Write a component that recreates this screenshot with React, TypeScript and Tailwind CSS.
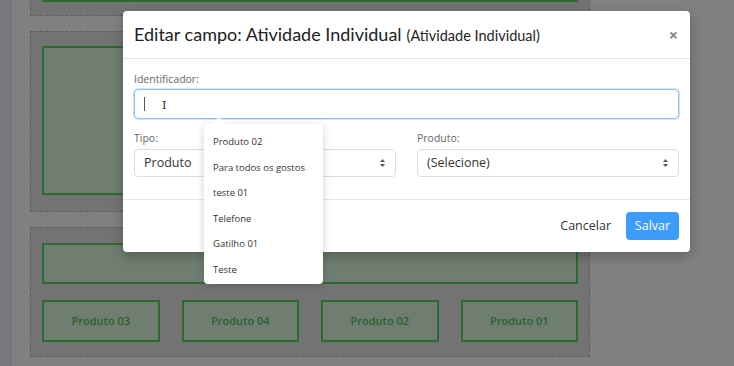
const SelectArrows = () => (
  <svg width="7" height="10" viewBox="0 0 7 10" className="shrink-0">
    <path d="M3.5 1 L6 4 L1 4 Z" fill="#555" />
    <path d="M3.5 9 L6 6 L1 6 Z" fill="#555" />
  </svg>
)

const ProductBox = ({ label }: { label: string }) => (
  <div className="flex-1 h-[42px] border-2 border-[#2b6b30] bg-[#6f7e70] flex items-center justify-center text-[11px] font-semibold text-[#2e5f31]">
    {label}
  </div>
)

export default function App() {
  const options = ["Produto 02", "Para todos os gostos", "teste 01", "Telefone", "Gatilho 01", "Teste"]
  const products = ["Produto 03", "Produto 04", "Produto 02", "Produto 01"]

  return (
    <div className="relative w-[734px] h-[366px] overflow-hidden bg-[#808080] flex" style={{ fontFamily: "'Open Sans', 'Noto Sans', sans-serif" }}>
      {/* left strip */}
      <div className="w-[12px] h-full bg-[#77787c]" />

      {/* canvas */}
      <div className="flex flex-col gap-[15px] pl-[18px] mt-[-12px]">
        <div className="w-[560px] h-[28px] border border-dashed border-[#5e5e5e] bg-[#747373] px-[11px]">
          <div className="h-[13px] border-2 border-t-0 border-[#2b6b30] bg-[#6f7e70]" />
        </div>
        <div className="w-[560px] h-[181px] border border-dashed border-[#5e5e5e] bg-[#747373] px-[11px] pt-[14px] pb-[16px]">
          <div className="h-full border-2 border-[#2b6b30] bg-[#6f7e70]" />
        </div>
        <div className="w-[560px] h-[130px] border border-dashed border-[#5e5e5e] bg-[#747373] px-[11px] pt-[15px] flex flex-col gap-[16px]">
          <div className="h-[41px] border-2 border-[#2b6b30] bg-[#6f7e70]" />
          <div className="flex gap-[22px]">
            {products.map((p) => (
              <ProductBox key={p} label={p} />
            ))}
          </div>
        </div>
      </div>

      {/* modal */}
      <div className="absolute left-[123px] top-[11px] w-[567px] bg-white rounded-[4px] shadow-[0_4px_12px_rgba(0,0,0,0.25)]">
        <div className="h-[48px] px-[11px] flex items-center justify-between border-b border-[#e6e6ea]">
          <div className="text-[#222] flex items-baseline" style={{ fontFamily: "Lato, 'Open Sans', sans-serif" }}>
            <span className="text-[18px]">Editar campo: Atividade Individual</span>
            <span className="text-[14.5px] ml-[5px]">(Atividade Individual)</span>
          </div>
          <span className="text-[16px] font-bold text-[#888] mr-[1px] leading-none">×</span>
        </div>

        <div className="px-[11px] pt-[13px] pb-[22px] border-b border-[#e6e6ea]">
          <div className="text-[10.5px] text-[#666] leading-[14px]">Identificador:</div>
          <div className="mt-[3px] h-[30px] rounded-[4px] border border-[#8fc1f5] shadow-[0_0_0_1px_#d2e6fb] flex items-center pl-[9px]">
            <div className="w-[1px] h-[14px] bg-[#555]" />
            <span className="ml-[17px] text-[13px] text-[#333] font-serif leading-none">I</span>
          </div>

          <div className="flex gap-[21px] mt-[12px]">
            <div className="flex-1">
              <div className="text-[10.5px] text-[#666] leading-[14px]">Tipo:</div>
              <div className="mt-[4px] h-[28px] rounded-[4px] border border-[#dcdcdc] flex items-center justify-between px-[9px]">
                <span className="text-[12.5px] text-[#333]">Produto</span>
                <SelectArrows />
              </div>
            </div>
            <div className="flex-1">
              <div className="text-[10.5px] text-[#666] leading-[14px]">Produto:</div>
              <div className="mt-[4px] h-[28px] rounded-[4px] border border-[#dcdcdc] flex items-center justify-between px-[9px]">
                <span className="text-[12.5px] text-[#333]">(Selecione)</span>
                <SelectArrows />
              </div>
            </div>
          </div>
        </div>

        <div className="h-[52px] px-[11px] flex items-center justify-end gap-[15px]">
          <span className="text-[12.5px] text-[#333]">Cancelar</span>
          <button className="h-[28px] w-[53px] rounded-[4px] bg-[#3d9bfb] text-white text-[12.5px]">Salvar</button>
        </div>
      </div>

      {/* dropdown */}
      <div className="absolute left-[204px] top-[124px] w-[119px] h-[160px] bg-white rounded-[4px] shadow-[0_2px_8px_rgba(0,0,0,0.18)] pl-[9px] pt-[11px] flex flex-col">
        <div className="absolute left-[10px] top-[-5px] w-[10px] h-[10px] bg-white rotate-45" />
        {options.map((o) => (
          <div key={o} className="h-[25.5px] shrink-0 flex items-start text-[9.5px] text-[#333] leading-[14px]">
            {o}
          </div>
        ))}
      </div>
    </div>
  )
}
